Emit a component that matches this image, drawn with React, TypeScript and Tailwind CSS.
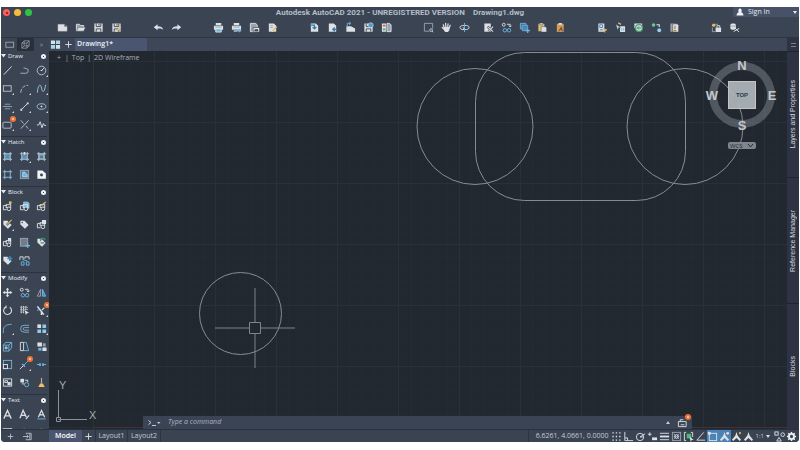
import React, { ReactNode } from 'react';

const L = '#dde1e6';
const G = '#9aa3af';
const B = '#6db6e2';
const Y = '#e3bd6a';
const D = '#3b4453';

interface Tool {
    label: string;
    icon: ReactNode;
    flyout?: boolean;
    badge?: boolean;
    active?: boolean;
}

interface Section {
    title: string;
    tools: Tool[];
}

const page = <path d="M2 1.5h5.5L10 4v6.5H2z" fill={L} stroke="none" />;
const floppy = (
    <>
        <path d="M1.5 1.5h9v9h-9z" fill={L} stroke="none" />
        <path d="M3.5 1.5v3.5h5V1.5M3.5 10.5V7.5h5v3" stroke={D} />
        <path d="M6.5 2v2" stroke={D} />
    </>
);
const pencil = (
    <>
        <path d="M6 10l4.5-5" stroke={Y} strokeWidth="1.6" />
        <path d="M5.2 11l.5-1.6 1 .9z" fill={L} stroke="none" />
    </>
);
const printer = (
    <>
        <path d="M3 1h6v2.5H3zM1 4h10v4.5H1z" fill={L} stroke="none" />
        <path d="M2.5 5.5h7" stroke={G} />
    </>
);
const tag = <path d="M1.5 2h4.5l4.5 4.5-4 4.2-5-4.7z" fill={L} stroke="none" />;
const block = (
    <>
        <path d="M1.5 9V5h4M1 9.5h4" stroke={L} />
        <rect x="4.5" y="4" width="5" height="3" stroke={L} />
        <circle cx="7.5" cy="8.5" r="2" fill={D} stroke={L} />
    </>
);
const hatchFrame = <path d="M3 1v10M9 1v10M1 3h10M1 9h10" stroke="#bcc8d2" />;
const copyObjects = (
    <>
        <circle cx="3" cy="3" r="1.6" stroke={L} />
        <path d="M6.5 2.5H10V5M8.5 4L10 5.5 11.5 4" stroke={L} />
        <circle cx="4.2" cy="9" r="1.9" stroke={B} />
        <circle cx="8.8" cy="9" r="1.9" stroke={B} />
    </>
);
const person = <path d="M6 1l1.2 4L11 9.5 9.5 11 6 7.5 2.5 11 1 9.5 4.8 5z" fill={L} stroke="none" />;

const toolbar: Tool[][][] = [
    [
        [
            { label: 'New', icon: <path d="M1 2.5h7l3 2.2V10H1zM8 2.5V5h3" fill={L} stroke={G} strokeWidth=".4" /> },
            {
                label: 'Open',
                icon: (
                    <>
                        <path d="M1.5 10V2.5h3.500l1 1.300h3.500V6" fill={G} stroke={L} />
                        <path d="M3.5 5.800h8L9.500 10H1.500z" fill={L} stroke={D} strokeWidth=".5" />
                    </>
                ),
            },
            { label: 'Save', icon: floppy },
            { label: 'Save As', icon: <>{floppy}{pencil}</> },
        ],
    ],
    [
        [
            { label: 'Undo', icon: <path d="M.8 5.8L5 2.500v2c3.500 0 5.700 1 6.200 4-1.500-1.600-3.200-1.600-6.200-1.500v2z" fill={L} stroke="none" /> },
            { label: 'Redo', icon: <path d="M11.2 5.8L7 2.5v2c-3.500 0-5.700 1-6.200 4C2.300 6.900 4 6.900 7 7v2z" fill={L} stroke="none" /> },
        ],
    ],
    [
        [
            { label: 'Plot', icon: <>{printer}<path d="M3 7.5h6V11H3z" fill={B} stroke={L} /></> },
            { label: 'Plot Preview', icon: <>{printer}<path d="M3 8h4v3H3z" fill={G} stroke="none" /><path d="M6 9.500h4M8.500 8l2 1.500-2 1.500" stroke={B} strokeWidth="1.400" /></> },
            {
                label: 'Page Setup',
                icon: (
                    <>
                        <path d="M1.5 1.5h6l1.500 2v7h-7.500z" fill={G} stroke={L} />
                        <path d="M4.5 6h7v5h-7z" fill={L} stroke={D} strokeWidth=".7" />
                        <path d="M6 8h4v2H6z" fill={D} stroke="none" />
                    </>
                ),
            },
            { label: 'Plot Style', icon: <>{page}<path d="M3.5 4h3M3.5 6h3" stroke={G} />{pencil}</> },
        ],
    ],
    [
        [
            { label: 'Attach', icon: <>{page}<path d="M1 3.500h5v4M4 5.500l2 2 2-2" stroke="#347aa8" strokeWidth="1.300" /></> },
            { label: 'Export', icon: <>{page}<path d="M11 8H6.500M8.500 6l-2 2 2 2" stroke="#347aa8" strokeWidth="1.500" /></> },
            { label: 'Import', icon: <><path d="M1.5 10.500v-6h5L11 7v3.500z" fill={L} stroke="none" /><path d="M2.500 6V1.500h3M4.500 0l2 1.500-2 1.500" stroke={B} /></> },
            { label: 'Publish', icon: <>{floppy}<circle cx="8.500" cy="3.500" r="2.700" fill="#4a9dcc" stroke={L} strokeWidth=".6" /></> },
            {
                label: 'Compare',
                icon: (
                    <>
                        <path d="M1 1.500h4.500v9H1z" fill={L} stroke="none" />
                        <path d="M6.500 1.500H9L11 3v7.500H6.500z" fill={G} stroke={L} />
                        <path d="M2 3h3v2H2z" fill="#d85c5c" stroke="none" />
                        <path d="M2 7h3v2H2z" fill="#4eae68" stroke="none" />
                    </>
                ),
            },
        ],
    ],
    [
        [
            { label: 'Zoom Window', icon: <><path d="M7 10H1.500V1.500h9V7" stroke={G} /><circle cx="8.800" cy="8.800" r="1.500" stroke={L} strokeWidth=".8" /><path d="M10 10l1.200 1.200" stroke={L} /></> },
            {
                label: 'Pan',
                icon: (
                    <>
                        <path d="M3.500 6L2.500 3M5.300 5.500L5 1.500M7.300 5.500L7.700 2M9 6.500l1-3M4 8.500L1.300 6" stroke={L} strokeWidth="1.300" strokeLinecap="round" />
                        <path d="M3 5.500h6.500L9 9l-1.500 2h-3L3 8.500z" fill={L} stroke="none" />
                    </>
                ),
            },
            { label: 'Orbit', icon: <><ellipse cx="6" cy="6" rx="5" ry="2.300" stroke={L} /><path d="M6 1v10" stroke={B} /><path d="M4 8.500l1.700-1.300L4 5.900" stroke={L} /></> },
        ],
        [
            { label: 'Cut', icon: <><path d="M1.500 1.500h7v9h-7z" fill={L} stroke="none" /><path d="M5 5l6 5.500M11 5l-5 5.500" stroke={D} strokeWidth="2.400" /><path d="M5 5l6 5.500M11 5l-5 5.500" stroke={L} strokeWidth="1.100" /></> },
            { label: 'Copy Clip', icon: copyObjects },
            { label: 'Copy with Base Point', icon: <><path d="M1.500 1.500h6v6h-6z" fill="#3d6f96" stroke={B} /><path d="M3.500 3.500h6v6h-6z" fill="#4f86b0" stroke={B} strokeWidth=".8" /><path d="M9.500 7v5M7 9.500h5" stroke={B} strokeWidth="1.300" /></> },
            { label: 'Paste', icon: <><path d="M1.500 2h6.500v8H1.500z" fill={Y} stroke="none" /><path d="M3 1h3.500v2H3zM4.500 5H9l1.500 1.500V11h-6z" fill={L} stroke={D} strokeWidth=".5" /></> },
            { label: 'Match Properties', icon: <><path d="M2 2h7.500v9H2z" fill="#d69a55" stroke="none" /><path d="M4 1h3.500v2H4z" fill={L} stroke="none" /><path d="M4 10.500l3-5 1 5M5 8.500h3" stroke={D} strokeWidth=".8" /></> },
        ],
    ],
    [
        [
            { label: 'Properties', icon: <><path d="M1.500 1.500h6.500v9H1.500z" fill={L} stroke="none" /><path d="M3 3h3v3H3zM3 8.500h3.500" stroke="#3f82b0" /><path d="M7 6.500l1.500 1.500 2.500.5-2 1-.5 2z" fill={Y} stroke={Y} strokeWidth=".6" /></> },
            { label: 'Quick Select', icon: <><path d="M5.500 4.500H11V11H5.500z" fill={L} stroke="none" /><path d="M1 2.500l5 3.500-2.300.3L3 9z" fill={L} stroke={D} strokeWidth=".4" /><path d="M7.500 6.500v3M9.500 6.500v3" stroke={B} /><path d="M3.500 1l3 1.500" stroke={Y} strokeWidth="1.500" /></> },
            { label: 'Reload', icon: <><path d="M1.500 1.500h8.500v5H1.500z" fill={L} stroke="none" /><circle cx="6.500" cy="6.500" r="3.700" fill={L} stroke="#46a672" strokeWidth="1.400" /><path d="M5 6.500h4M6.500 4.800L4.800 6.500l1.700 1.700" stroke="#2f7d55" /></> },
            { label: 'Sync', icon: <><circle cx="2.800" cy="3.200" r="1.900" fill="#65ce90" stroke="none" /><circle cx="9" cy="9" r="2.100" fill="#8fd3ee" stroke="none" /><path d="M6 3h3v2.500" stroke={L} strokeWidth="1.200" /></> },
            { label: 'Purge', icon: <><path d="M1.500 1.500h4.500v9H1.500z" fill={G} stroke="none" /><path d="M4 2h5l1.500 1.500v7.500H4z" fill={L} stroke={D} strokeWidth=".6" /><path d="M6.500 4v4M5 9.500h3" stroke="#a98738" strokeWidth="1.400" /></> },
        ],
    ],
    [
        [
            { label: 'Lock', icon: <><path d="M5 6h6v5H5z" fill={L} stroke="none" /><path d="M6.500 6V4h3v2" stroke={L} /><path d="M1.500 6v4.500h3M4.500 2.500h3" stroke={G} /><circle cx="3" cy="3.500" r="1.800" fill={Y} stroke="none" /></> },
            { label: 'Detach', icon: <><path d="M1.500 3c0-2 6-2 6 0v4c0 2-6 2-6 0z" fill={L} stroke="none" /><path d="M1.500 3.500c1 1.500 5 1.500 6 0" stroke={G} /><path d="M5 10.500l6-3.500M6.500 6.500L11 11" stroke={L} /></> },
        ],
    ],
];

const sections: Section[] = [
    {
        title: 'Draw',
        tools: [
            { label: 'Line', icon: <path d="M2 10.5l8.500-9" /> },
            { label: 'Polyline', icon: <path d="M1.5 9h6a2.600 2.600 0 0 0 0-5.200L5 3" stroke="#a9b4bf" /> },
            { label: 'Circle', flyout: true, icon: <><circle cx="6" cy="6" r="4.700" stroke="#b3c4d0" /><path d="M6 6l3-3M5 6h2" /></> },
            { label: 'Rectangle', flyout: true, icon: <rect x="1.5" y="3" width="8.500" height="6" stroke="#b9c2cc" /> },
            { label: 'Arc', flyout: true, icon: <path d="M2 10.5C2 6 5 2.500 10 2.500" stroke="#b9c2cc" strokeDasharray="4 1.500" /> },
            { label: 'Spline', flyout: true, icon: <path d="M1.5 10.500C2 2 5 0 6 5.500S9 11 10.500 2" stroke="#a8c6d8" /> },
            { label: 'Construction Line', flyout: true, icon: <><path d="M3 3.5h6M3 8.5h6" stroke="#84a9c2" /><path d="M1 6h10" stroke={G} /></> },
            { label: 'Ray', flyout: true, icon: <><path d="M2.500 9.500l7-7" /><path d="M1.500 8.500h2v2h-2zM8.500 1.500h2v2h-2z" fill={L} stroke="none" /></> },
            { label: 'Ellipse', flyout: true, icon: <><ellipse cx="6" cy="6" rx="4.700" ry="3" stroke="#a8c6d8" /><path d="M5 6h2M6 5v2" /></> },
            { label: 'Revision Cloud', flyout: true, badge: true, icon: <rect x="1" y="3.500" width="9" height="6.500" rx="1" stroke="#b9c2cc" /> },
            { label: 'Multiple Points', flyout: true, icon: <path d="M2 1.500l3 3.500M2 10.500l8.500-9M7.500 7.500l2.500 3" stroke="#bcc9d4" /> },
            { label: 'Break Line', icon: <path d="M1 6.500h2L4.500 3l2 6.500L8 5l1 2h2" /> },
        ],
    },
    {
        title: 'Hatch',
        tools: [
            { label: 'Hatch', icon: <><path d="M3 3h6v6H3z" fill="#4d93bd" stroke="none" />{hatchFrame}</> },
            { label: 'Gradient', flyout: true, icon: <><path d="M3 4h6v5H3z" fill="#4d93bd" stroke="none" />{hatchFrame}<path d="M5 1h2v3H5z" fill={L} stroke="none" /></> },
            { label: 'Boundary', icon: <><path d="M3 3h6v6H3z" fill="#79a9bc" stroke="none" />{hatchFrame}<path d="M4.500 5h3v3h-3z" fill="#47799a" stroke="none" /></> },
            { label: 'Region', icon: <path d="M3 1v10M9 1v10M1 3h10M1 9h10" stroke="#8ec4e2" /> },
            { label: 'Edit Hatch', icon: <><rect x="1.500" y="1.500" width="9" height="9" fill="#47799a" stroke={G} /><path d="M4 3.500v5h5V6.500l-2.500-3z" fill={B} stroke={L} strokeWidth=".8" /></> },
            { label: 'Wipeout', icon: <><path d="M1.500 1.500H7L10.800 5v5.500H1.500z" fill="#f2f4f6" stroke="none" /><circle cx="6" cy="6.500" r="1.600" fill={D} stroke="none" /></> },
        ],
    },
    {
        title: 'Block',
        tools: [
            { label: 'Insert', icon: <>{block}<circle cx="9" cy="2" r="1.600" fill={Y} stroke="none" /></> },
            { label: 'Create Block', icon: <><path d="M5 1h4.500L11 2.500V8H5z" fill={B} stroke={L} strokeWidth=".5" />{block}</> },
            { label: 'Edit Block', icon: <>{block}<path d="M6 5l4.500-4" stroke={Y} strokeWidth="1.400" /></> },
            { label: 'Edit Attributes', flyout: true, icon: <>{tag}<path d="M5 6.500L10.500 1" stroke={D} strokeWidth="2.400" /><path d="M5 6.500L10.500 1" stroke={Y} strokeWidth="1.200" /></> },
            { label: 'Define Attributes', icon: <>{tag}<circle cx="3.500" cy="3.800" r=".8" fill={D} stroke="none" /></> },
            { label: 'Manage Attributes', icon: <>{block}<path d="M6.500 1H11v4.500H6.500z" fill={L} stroke="none" /></> },
            { label: 'Set Base Point', icon: <>{block}<path d="M6.500 1h3.500v4H6.500z" fill={L} stroke="none" /></> },
            { label: 'Write Block', icon: <><rect x="1.500" y="1.500" width="8" height="8.500" fill="#727d8c" stroke={G} /><path d="M9.500 7v5M7 9.500h5" stroke={B} strokeWidth="1.300" /></> },
            { label: 'Sync Attributes', icon: <>{tag}<path d="M5 4.500a2.500 2.500 0 0 1 5-1M5 6.500h4" stroke="#3d9268" strokeWidth="1.400" /></> },
            { label: 'Attribute Display', icon: <>{tag}<path d="M8.500 1v5.500M5.800 3.800h5.500" stroke="#4285b8" strokeWidth="1.600" /></> },
            { label: 'Replace Block', icon: <><path d="M1 5.500V2h3.500v3M6.500 2H11v3M6.500 2v2" stroke={L} /><path d="M2.500 11V7.500h3V11zM8 11V7.500h3V11zM4 5l5 1.500" stroke={B} /></> },
        ],
    },
    {
        title: 'Modify',
        tools: [
            { label: 'Move', icon: <path d="M6 .8l2 2.200H6.700v2.300H9V4l2.200 2L9 8V6.700H6.700V9H8l-2 2.200L4 9h1.300V6.700H3V8L.8 6 3 4v1.300h2.300V3H4z" fill={L} stroke="none" /> },
            { label: 'Copy', icon: copyObjects },
            { label: 'Mirror', icon: <><path d="M5 2.500V10H1.500z" stroke={G} /><path d="M7 2.500V10h3.500z" fill="#4c8fba" stroke={B} /></> },
            { label: 'Rotate', icon: <path d="M4 2.300A4.300 4.300 0 1 0 8.500 2.500M4.500.5L4.300 3 2 3" strokeWidth="1.200" /> },
            { label: 'Select', icon: <><path d="M1.500 2.500h8M1.500 5h8M1.500 7.500h4M2.500 1v8M5 1v8M7.500 1v4" stroke={L} strokeDasharray="1.500 .7" /><path d="M6 5.500l5 3-2.200.4L7.500 11z" fill={L} stroke="none" /></> },
            { label: 'Trim', flyout: true, badge: true, icon: <><path d="M1.500 1.500l7 9M6 6.500v4.500" strokeWidth="1.700" /><path d="M9 3L6.500 5.500" strokeWidth="1.200" /><path d="M1 5.500h3" stroke={B} /></> },
            { label: 'Fillet', flyout: true, icon: <path d="M1.500 11V8C1.500 4 4 1.500 10.500 1.500" stroke={B} /> },
            { label: 'Offset', icon: <><path d="M11 2.500H5.500a3.700 3.700 0 0 0 0 7.500H11" stroke={B} /><path d="M11 5H6a1.400 1.400 0 0 0 0 2.800h5" stroke={G} /></> },
            { label: 'Array', flyout: true, icon: <><path d="M1.500 1.500h4v4h-4z" fill={L} stroke="none" /><path d="M7 1.500h4v4H7zM1.500 7h4v4h-4zM7 7h4v4H7z" fill="#8ccbeb" stroke="none" /></> },
            { label: 'Extrude', icon: <><path d="M1.500 4.500h6V11h-6zM1.500 4.500l2.500-3h6.500v6L7.500 11M7.500 4.500l3-3" stroke={B} /><path d="M3.500 6.500h2v2h-2z" /></> },
            { label: 'Stretch', icon: <><path d="M1.500 1.500H5v9H1.500z" /><path d="M5 1.500h3l2.500 9H5" stroke={B} /></> },
            { label: 'Align', icon: <><path d="M1.500 1.500h5V6h-5zM7 7h4.500v4H7z" fill={L} stroke="none" /><path d="M7.500 2.500h3V6h-3z" fill={G} stroke="none" /><path d="M2.500 7.500H6v3H2.500z" fill={B} stroke="none" /></> },
            { label: 'Scale', icon: <><rect x="1.500" y="1.500" width="9" height="9" stroke={B} /><rect x="1.500" y="6" width="4.500" height="4.500" /></> },
            { label: 'Lengthen', flyout: true, badge: true, icon: <><path d="M1 11l4-4" stroke={L} /><path d="M5 7l5-5" stroke={B} /><path d="M3.500 5.500l3 3" stroke={B} strokeWidth="1.500" /></> },
            { label: 'Break', icon: <><path d="M1 6h4M7 6h4" stroke={B} /><path d="M3.500 4.500h1.800v3H3.500zM6.800 4.500h1.800v3H6.800z" fill={B} stroke="none" /></> },
            { label: 'Draw Order', icon: <><path d="M1.500 10V2h9v8zM3 4h3v2H3z" /><path d="M6 5.500h3.500V9H6z" fill={L} stroke="none" /></> },
            { label: 'Overkill', icon: <><path d="M1.500 2h4v4h-4z" fill={L} stroke="none" /><path d="M3 7.500h3M6.500 3.500h3v2" /><circle cx="8.300" cy="8.300" r="2.300" stroke={B} /></> },
            { label: 'Clean', icon: <><path d="M6 1v6" stroke="#d4b07a" strokeWidth="1.200" /><path d="M4.500 7h3L9.500 11h-7z" fill="#edc06b" stroke="none" /></> },
        ],
    },
    {
        title: 'Text',
        tools: [
            { label: 'Multiline Text', icon: <path d="M2 10.500l4-9 4 9M3.500 7.500h5" strokeWidth="1.400" /> },
            { label: 'Edit Text', icon: <><path d="M1 10l3.500-8.500L8 9M2.500 7h4.500" strokeWidth="1.400" /><path d="M7.500 11L11 7" strokeWidth="1.200" /></> },
            { label: 'Single Line Text', icon: <><path d="M2.500 9L6 1.500 9.500 9M4 6.500h4" strokeWidth="1.300" /><path d="M1.500 10.800h9" stroke={B} /></> },
            { label: 'Table', icon: <path d="M1 2h10v3H1zM2 6h2M5 6h2" fill={L} /> },
            { label: 'Spell Check', icon: <path d="M1 6V3h2v3M5 2.500v3h1.500v-3zM10.500 3h-2v3" /> },
            { label: 'Find Text', icon: <path d="M1.500 7a4.500 4.500 0 0 1 9 0M5 6l1-2 1 2" /> },
        ],
    },
];

const statusTools: Tool[] = [
    { label: 'Grid', icon: <path d="M1.500 2h9M1.500 6h9M1.500 10h9" strokeWidth="1.500" strokeDasharray="1.500 2.200" /> },
    { label: 'Ortho', icon: <path d="M2 1v9.500h9M2 7.500h3v3" /> },
    { label: 'Polar Tracking', icon: <><circle cx="5.500" cy="6.500" r="4" /><path d="M5.500 6.500L11 3M5.500 6.500H9" /></> },
    { label: 'Dynamic Input', icon: <><path d="M3 1.500v4M1 3.500h4" /><path d="M5.500 7H11v3H5.500z" fill={L} stroke="none" /></> },
    { label: 'Lineweight', icon: <><path d="M1 2.500h10M1 9.500h10" /><path d="M1 6h10" strokeWidth="2" /></> },
    { label: 'Transparency', icon: <><rect x="1.500" y="1.500" width="9" height="9" stroke={G} /><path d="M3 3l6 6M9 3L3 9M3 6h6" stroke={G} /><circle cx="6" cy="6" r="2" /></> },
    { label: 'Selection Cycling', icon: <><path d="M3.500 1.500h-2v9h2M8.500 1.500h2v5" /><path d="M4 3h5v5H4z" fill="#48b874" stroke="none" /><path d="M7 6l4.500 3.500-2 .2-1 2z" fill={L} stroke="none" /></> },
    { label: 'Isometric', icon: <path d="M9.500 1.500L2 10h9" /> },
    { label: 'Object Snap', active: true, icon: <><rect x="2.500" y="2.500" width="8" height="8" /><path d="M1 1h3v3H1z" fill={L} stroke="none" /></> },
    { label: 'Annotation Visibility', active: true, icon: <>{person}<circle cx="9.500" cy="2.500" r="1.500" fill={L} stroke="none" /></> },
    { label: 'Auto Scale', icon: <>{person}<path d="M9 1.500L10.500 3" stroke={Y} strokeWidth="2" /></> },
    { label: 'Annotation Scale', icon: person },
];

const railPanels = ['Layers and Properties', 'Reference Manager', 'Blocks'];

const Icon = ({ children }: { children: ReactNode }) => (
    <svg viewBox="0 0 12 12" className="size-[11px] shrink-0 overflow-visible" fill="none" stroke={L} strokeWidth="1" aria-hidden="true">
        {children}
    </svg>
);

// Orange "what's new" marker
const Badge = () => (
    <span className="absolute -top-[3px] -right-[3px] flex size-[6px] items-center justify-center rounded-full bg-[#ef7433]">
        <span className="size-[2px] rounded-full bg-[#ffd9c2]" />
    </span>
);

const ToolButton = ({ tool }: { tool: Tool }) => (
    <button type="button" aria-label={tool.label} className="relative flex items-center justify-center">
        <Icon>
            {tool.icon}
            {tool.flyout && <path d="M13 11v2h-2z" fill={L} stroke="none" />}
        </Icon>
        {tool.badge && <Badge />}
    </button>
);

const TitleBar = () => (
    <header className="relative flex h-[11px] items-center justify-between pl-[2px]">
        <div className="flex gap-[4px]">
            <button type="button" aria-label="Close window" className="flex size-[7px] items-center justify-center rounded-full bg-[#f7605a]">
                <span className="size-[2px] rounded-full bg-[#7c1512]" />
            </button>
            <button type="button" aria-label="Minimize window" className="size-[7px] rounded-full bg-[#f5bd35]" />
            <button type="button" aria-label="Zoom window" className="size-[7px] rounded-full bg-[#2fc544]" />
        </div>
        <h1 className="absolute inset-x-0 top-0 text-center font-['Roboto','Liberation_Sans',sans-serif] text-[8px] leading-[12px] font-bold whitespace-pre text-[#b4bcc8]">
            {'Autodesk AutoCAD 2021 - UNREGISTERED VERSION    Drawing1.dwg'}
        </h1>
        <button type="button" className="relative flex h-[10px] w-[66px] items-center self-start bg-[#475168] pr-[2px] pl-[3px] text-[7px] text-[#e6e9ee]">
            <svg viewBox="0 0 8 8" className="mr-[4px] size-[8px]" fill="#f0f2f4" aria-hidden="true">
                <path d="M4 .5a1.800 2.200 0 0 1 1.200 3.800C6.500 5 7.300 5.500 7.500 7.500h-7C.7 5.500 1.500 5 2.800 4.300A1.800 2.200 0 0 1 4 .5z" />
            </svg>
            Sign In
            <svg viewBox="0 0 4 3" className="ml-auto h-[3px] w-[4px]" fill="#e6e9ee" aria-hidden="true">
                <path d="M0 0h4L2 3z" />
            </svg>
        </button>
    </header>
);

const Toolbar = () => (
    <div role="toolbar" aria-label="Main" className="flex h-5 items-center gap-[31px] border-b border-[#2d3441] pl-[56px]">
        {toolbar.map((group, i) => (
            <div key={i} className="flex gap-[13px]">
                {group.map((tools, j) => (
                    <div key={j} className="flex gap-[7px]">
                        {tools.map((tool) => (
                            <ToolButton key={tool.label} tool={tool} />
                        ))}
                    </div>
                ))}
            </div>
        ))}
    </div>
);

const PaletteSection = ({ section }: { section: Section }) => (
    <section className="mr-[2px] border-t border-[#2c3340] pb-[3px] first:border-t-0">
        <h2 className="flex h-[10px] items-center text-[6px] font-medium text-[#eef0f3]">
            <svg viewBox="0 0 5 4" className="mr-[2px] h-[4px] w-[5px]" fill="#e8ebef" aria-hidden="true">
                <path d="M0 0h5L2.500 3.500z" />
            </svg>
            {section.title}
            <button type="button" aria-label={`${section.title} settings`} className="mr-px ml-auto flex size-[5px] items-center justify-center rounded-full bg-[#eef0f3]">
                <span className="size-px bg-[#3b4453]" />
            </button>
        </h2>
        <div className="grid auto-rows-[18px] grid-cols-[12px_22px_12px]">
            {section.tools.map((tool) => (
                <div key={tool.label} className="flex items-center justify-center">
                    <ToolButton tool={tool} />
                </div>
            ))}
        </div>
    </section>
);

const Palette = () => (
    <aside className="flex w-[48px] shrink-0 flex-col">
        <div className="flex h-[13px] shrink-0 items-stretch">
            <button type="button" aria-label="Drafting" className="flex w-4 items-center justify-center">
                <Icon><rect x="2" y="3.500" width="8.500" height="5.500" stroke={G} /></Icon>
            </button>
            <button type="button" aria-label="Modeling" className="flex w-[17px] items-center justify-center bg-[#29303b]">
                <Icon><path d="M2 4.500h5.500V10H2zM2 4.500L4.500 2H10v5.500L7.500 10M7.500 4.500L10 2M4.500 2v5.500H10M4.500 7.500L2 10" stroke={G} strokeWidth=".8" /></Icon>
            </button>
            <button type="button" aria-label="More tool sets" className="flex-1 text-[7px] leading-none text-[#8c96a5]">»</button>
        </div>
        <div className="min-h-0 flex-1 basis-0 overflow-hidden">
            {sections.map((section) => (
                <PaletteSection key={section.title} section={section} />
            ))}
        </div>
    </aside>
);

const FileTabs = () => (
    <nav className="flex h-[13px] shrink-0 items-stretch bg-[#3d4758]">
        <button type="button" aria-label="Start" className="flex w-[13px] items-center justify-center">
            <Icon>
                <path d="M1 1.500h4.500v4H1zM6.500 6.500H11v4H6.500z" fill={L} stroke="none" />
                <path d="M6.500 1.500H11v4H6.500zM1 6.500h4.500v4H1z" fill="#a9d6ec" stroke="none" />
            </Icon>
        </button>
        <button type="button" aria-label="New tab" className="flex w-[13px] items-center justify-center">
            <Icon><path d="M6 2.500v7M2.500 6h7" /></Icon>
        </button>
        <a href="#drawing1" className="flex w-[72px] items-center bg-[#4a5670] pl-[2px] text-[7px] font-semibold text-[#eceff3]">Drawing1*</a>
    </nav>
);

const Compass = () => (
    <div className="absolute top-[7px] right-[8px] flex flex-col items-center gap-[10px]">
        <div className="relative grid grid-cols-[14px_46px_14px] grid-rows-[14px_46px_14px] place-items-center font-['Liberation_Sans',Arial,sans-serif] text-[13px] leading-none font-bold text-[#c3c7cb]">
            <svg viewBox="0 0 74 74" className="absolute inset-0 size-full" fill="none" aria-hidden="true">
                <circle cx="37" cy="37" r="29" stroke="#a0a6ad" strokeOpacity=".38" strokeWidth="8" />
            </svg>
            <button type="button" className="relative col-start-2 row-start-1">N</button>
            <button type="button" className="relative col-start-1 row-start-2">W</button>
            <button type="button" className="relative col-start-2 row-start-2 flex size-[28px] items-center justify-center border border-[#c2c5c7] bg-[#b4b9bc]/90">
                <span className="flex size-4 items-center justify-center bg-[#a1abb2] text-[6px] text-[#343b43]">TOP</span>
            </button>
            <button type="button" className="relative col-start-3 row-start-2">E</button>
            <button type="button" className="relative col-start-2 row-start-3">S</button>
        </div>
        <button type="button" className="flex h-[7px] w-[28px] items-center justify-between rounded-[2px] bg-[#7e858b] px-[2px] text-[6px] leading-none text-[#262d35]">
            WCS
            <svg viewBox="0 0 7 5" className="h-[5px] w-[7px]" fill="none" stroke="#262d35" aria-hidden="true">
                <path d="M1 1l2.500 3L6 1" />
            </svg>
        </button>
    </div>
);

const Canvas = () => (
    <main className="relative min-h-0 flex-1 overflow-hidden bg-[#212830]">
        <svg className="absolute inset-0 size-full" fill="none" aria-label="Drawing area">
            <defs>
                <pattern id="minor" x="44" y="10" width="12.200" height="12.200" patternUnits="userSpaceOnUse">
                    <path d="M.5 0v12.200M0 .5h12.200" stroke="#232a33" />
                </pattern>
                <pattern id="major" x="44" y="10" width="61" height="61" patternUnits="userSpaceOnUse">
                    <path d="M.5 0v61M0 .5h61" stroke="#28303a" />
                </pattern>
            </defs>
            <rect width="100%" height="100%" fill="url(#minor)" />
            <rect width="100%" height="100%" fill="url(#major)" />
            <path d="M44.500 0v377" stroke="#283a30" />
            <path d="M44 376.500h3000" stroke="#46303a" />
            <g stroke="#868d92">
                <circle cx="426" cy="75.500" r="58" />
                <circle cx="636" cy="75.500" r="58" />
                <rect x="426.500" y="1.500" width="210" height="148" rx="49" />
                <circle cx="191.500" cy="262.500" r="41" />
            </g>
            <path d="M206 237v34M206 283v34M166 277h34M212 277h34M200.500 271.500h11v11h-11z" stroke="#7d848a" />
        </svg>
        <div className="relative flex items-center gap-[3px] pl-[7px] text-[7px] leading-[14px] text-[#a9b0b8]">
            <button type="button" className="w-[6px]">+</button>
            <span>|</span>
            <button type="button">Top</button>
            <span>|</span>
            <button type="button">2D Wireframe</button>
        </div>
        <Compass />
        <svg viewBox="0 0 44 44" className="absolute bottom-[5px] left-[5px] size-[44px] overflow-visible" fill="none" stroke="#8b9298" aria-hidden="true">
            <path d="M4.500 10v28M4.500 39.500H33M2.500 37.500h4v4h-4z" />
            <g fill="#a3a9ae" stroke="none" className="font-['Liberation_Sans',Arial,sans-serif] text-[11px]">
                <text x="5" y="9">Y</text>
                <text x="35" y="39">X</text>
            </g>
        </svg>
        <form className="absolute right-[95px] bottom-0 left-[94px] flex h-[13px] items-center bg-[#3a4454] pr-1 pl-[5px]" onSubmit={(e) => e.preventDefault()}>
            <svg viewBox="0 0 13 8" className="h-[8px] w-[13px]" fill="none" stroke="#c5cbd3" aria-hidden="true">
                <path d="M.5 1.500l2.500 2-2.500 2M4 6.500h4" />
                <path d="M9 3h3.500l-1.700 2z" fill="#c5cbd3" stroke="none" />
            </svg>
            <input
                aria-label="Command"
                placeholder="Type a command"
                className="ml-[7px] min-w-0 flex-1 text-[7px] text-[#c5cbd3] italic outline-none placeholder:text-[#aeb6c1]"
            />
            <button type="button" aria-label="Command history" className="mr-[7px]">
                <svg viewBox="0 0 4 3" className="h-[3px] w-[4px]" fill="#c5cbd3"><path d="M0 3h4L2 0z" /></svg>
            </button>
            <button type="button" aria-label="Share" className="relative">
                <Icon><path d="M1.500 5H10v5.500H1.500zM3.500 5V3H7M4 8.500h4" /></Icon>
                <Badge />
            </button>
        </form>
    </main>
);

const Rail = () => (
    <aside className="flex w-[12px] shrink-0 flex-col bg-[#2e3344] font-['Liberation_Sans',Arial,sans-serif] text-[7px] text-[#d3d7de]">
        <button type="button" aria-label="Collapse panels" className="flex h-[13px] shrink-0 items-center justify-center">
            <svg viewBox="0 0 5 4" className="h-[4px] w-[5px]" fill="none" stroke="#78808f" aria-hidden="true">
                <path d="M0 .5h5M0 3.500h5" />
            </svg>
        </button>
        {railPanels.map((name) => (
            <button key={name} type="button" className="flex flex-1 items-center justify-center border-t border-[#1f2431]">
                <span className="rotate-180 leading-[10px] whitespace-nowrap [writing-mode:vertical-rl]">{name}</span>
            </button>
        ))}
    </aside>
);

const StatusBar = () => (
    <footer className="flex h-[13px] shrink-0 items-stretch border-t border-[#2a313d] bg-[#3a4352] text-[7px] text-[#c3cad4]">
        <div className="flex w-[48px] items-center gap-[6px] pl-[4px]">
            <button type="button" aria-label="Add tool set"><Icon><path d="M6 3v6M3 6h6" stroke="#b5bcc6" /></Icon></button>
            <button type="button" aria-label="Collapse tool sets"><Icon><path d="M4 2.500h6v7H4M1 6h6M5 4l2 2-2 2M8.500 3v6" stroke="#b5bcc6" /></Icon></button>
        </div>
        <a href="#model" className="flex w-[33px] items-center justify-center bg-[#4a5670] font-semibold text-white">Model</a>
        <button type="button" aria-label="New layout" className="flex w-[14px] items-center justify-center border-r border-[#2d3441]">
            <Icon><path d="M6 2.500v7M2.500 6h7" /></Icon>
        </button>
        <a href="#layout1" className="flex w-[32px] items-center justify-center border-r border-[#2d3441]">Layout1</a>
        <a href="#layout2" className="flex w-[33px] items-center justify-center border-r border-[#2d3441]">Layout2</a>
        <div className="ml-auto flex items-center border-l border-[#2d3441] pr-[2px] pl-[7px]">
            <output className="mr-[2px] whitespace-nowrap">6.6261, 4.0661, 0.0000</output>
            {statusTools.map((tool) => (
                <button key={tool.label} type="button" aria-label={tool.label} className={`flex h-3 w-3 items-center justify-center ${tool.active ? 'bg-[#4b83b8]' : ''}`}>
                    <Icon>{tool.icon}</Icon>
                </button>
            ))}
            <button type="button" className="flex items-center gap-[2px] pl-px text-[6px]">
                1:1
                <svg viewBox="0 0 4 3" className="h-[3px] w-[4px]" fill={L} aria-hidden="true"><path d="M0 0h4L2 3z" /></svg>
            </button>
            <button type="button" aria-label="Workspace" className="ml-[4px]">
                <Icon><rect x="1" y="1" width="3.500" height="3.500" /><circle cx="9.500" cy="4" r="2" /><path d="M5.500 7L8 11H3z" /></Icon>
            </button>
            <button type="button" aria-label="Customize" className="ml-px">
                <Icon>
                    <circle cx="6" cy="6" r="2.800" strokeWidth="2" stroke="#f0f2f4" />
                    <path d="M6 1v1.500M6 9.500V11M1 6h1.500M9.500 6H11M2.500 2.500l1 1M8.500 8.500l1 1M2.500 9.500l1-1M8.500 3.500l1-1" stroke="#f0f2f4" strokeWidth="1.600" />
                </Icon>
            </button>
        </div>
    </footer>
);

export default function App() {
    return (
        <div className="flex h-screen flex-col bg-white px-px pt-[7px] pb-[8px] font-['Open_Sans','Noto_Sans',sans-serif]">
            <div className="flex min-h-0 flex-1 flex-col overflow-hidden rounded-b-[4px] bg-[#3b4453]">
                <TitleBar />
                <Toolbar />
                <div className="flex min-h-0 flex-1">
                    <Palette />
                    <div className="flex min-w-0 flex-1 flex-col">
                        <FileTabs />
                        <Canvas />
                    </div>
                    <Rail />
                </div>
                <StatusBar />
            </div>
        </div>
    );
}
